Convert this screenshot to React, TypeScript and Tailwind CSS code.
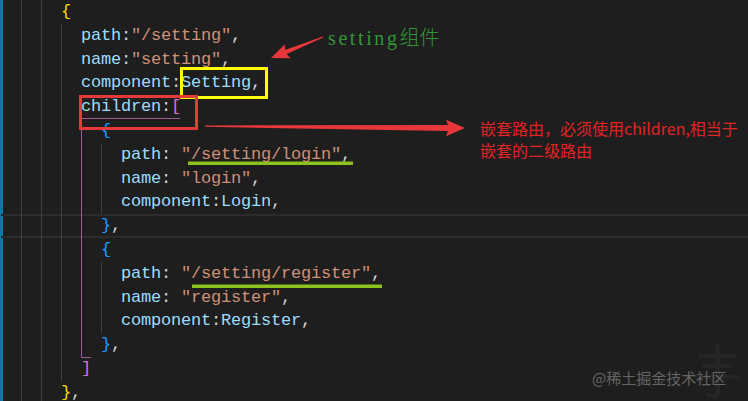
import React from "react";

type Tok = [string, string];

const K = "text-[#9cdcfe]";
const P = "text-[#d4d4d4]";
const S = "text-[#ce9178]";
const Y = "text-[#ffd700]";
const M = "text-[#da70d6]";
const B = "text-[#179fff]";

const lines: Tok[][] = [
  [["      ", P], ["{", Y]],
  [["        ", P], ["path", K], [":", P], ['"/setting"', S], [",", P]],
  [["        ", P], ["name", K], [":", P], ['"setting"', S], [",", P]],
  [["        ", P], ["component", K], [":", P], ["Setting", K], [",", P]],
  [["        ", P], ["children", K], [":", P], ["[", M]],
  [["          ", P], ["{", B]],
  [["            ", P], ["path", K], [": ", P], ['"/setting/login"', S], [",", P]],
  [["            ", P], ["name", K], [": ", P], ['"login"', S], [",", P]],
  [["            ", P], ["component", K], [":", P], ["Login", K], [",", P]],
  [["          ", P], ["}", B], [",", P]],
  [["          ", P], ["{", B]],
  [["            ", P], ["path", K], [": ", P], ['"/setting/register"', S], [",", P]],
  [["            ", P], ["name", K], [": ", P], ['"register"', S], [",", P]],
  [["            ", P], ["component", K], [":", P], ["Register", K], [",", P]],
  [["          ", P], ["}", B], [",", P]],
  [["        ", P], ["]", M]],
  [["      ", P], ["}", Y], [",", P]],
];

export default function App() {
  return (
    <div className="relative w-[748px] h-[401px] overflow-hidden bg-[#1e1e1e] flex">
      {/* gutter stripe */}
      <div className="w-[3px] shrink-0 bg-[#0b7aa8]" />

      {/* code */}
      <div className="-ml-[2px] flex-1 flex flex-col font-['Liberation_Mono',monospace] text-[17px] tracking-[-0.2px] leading-[23.8px]">
        {lines.map((line, i) => (
          <div
            key={i}
            className={`h-[23.8px] shrink-0 whitespace-pre ${
              i === 9 ? "border-y-2 border-[#2b2b2b] leading-[19.8px]" : ""
            }`}
          >
            {line.map(([t, c], j) => (
              <span key={j} className={c}>
                {t}
              </span>
            ))}
          </div>
        ))}
      </div>

      {/* guides, arrows, marks */}
      <svg
        className="absolute inset-0 pointer-events-none"
        width="748"
        height="401"
        viewBox="0 0 748 401"
      >
        <g stroke="#404040" strokeWidth="1">
          <line x1="21.5" y1="0" x2="21.5" y2="401" />
          <line x1="41.5" y1="0" x2="41.5" y2="401" />
          <line x1="61.5" y1="24" x2="61.5" y2="381" />
          <line x1="101.5" y1="143" x2="101.5" y2="214" />
          <line x1="101.5" y1="262" x2="101.5" y2="333" />
        </g>
        <path d="M180 118.5 H81.5 V357.5 H91" fill="none" stroke="#9a5c9a" strokeWidth="1" />

        {/* underlines */}
        <rect x="188" y="161.5" width="165" height="3.5" fill="#8dc21f" />
        <rect x="192" y="284.5" width="190" height="3.5" fill="#8dc21f" />

        {/* boxes */}
        <rect x="181.5" y="68.5" width="85" height="29" fill="none" stroke="#ffff00" strokeWidth="3" />
        <rect x="80.5" y="96.5" width="116" height="32" fill="none" stroke="#e53a3a" strokeWidth="3" />

        {/* arrows */}
        <polygon
          points="322.8,36.4 285,50 284.9,44.3 271,58 290.5,58.3 286.6,54 323.2,37.6"
          fill="#e8373a"
        />
        <polygon
          points="205,125.4 448,125 446,119.8 465,128 446,136.3 448,131 205,126.8"
          fill="#e8373a"
        />

        {/* faint logo mark */}
        <g stroke="#262626" strokeWidth="4" fill="none" strokeLinecap="round">
          <path d="M717 346 L718 352" />
          <path d="M700 356 H734" />
          <path d="M704 366 H730" />
          <path d="M696 377 H738" />
          <path d="M718 356 V392 Q716 398 708 395" />
        </g>
      </svg>

      {/* green note */}
      <div className="absolute left-[328px] top-[25px] text-[20px] leading-[24px] text-[#35953a] whitespace-nowrap font-['Liberation_Serif','Noto_Sans_CJK_SC',serif]">
        <span className="tracking-[2.6px]">setting</span>
        <span className="font-['Noto_Sans_CJK_SC',sans-serif] font-light">组件</span>
      </div>

      {/* red note */}
      <div className="absolute left-[480px] top-[117px] text-[16px] leading-[22px] text-[#e02424] font-['Noto_Sans_CJK_SC',sans-serif]">
        <div className="whitespace-nowrap">嵌套路由，必须使用children,相当于</div>
        <div className="whitespace-nowrap">嵌套的二级路由</div>
      </div>

      {/* watermark */}
      <div className="absolute left-[592px] top-[369px] text-[15px] leading-[18px] text-[#656565] whitespace-nowrap font-['Noto_Sans_CJK_SC',sans-serif]">
        @稀土掘金技术社区
      </div>
    </div>
  );
}
